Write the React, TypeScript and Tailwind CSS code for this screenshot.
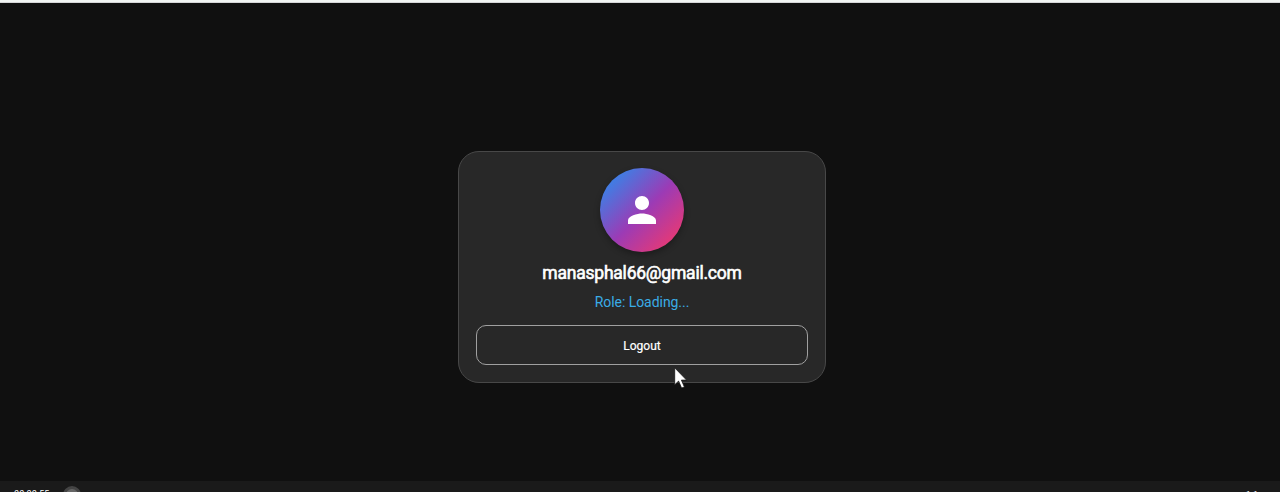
import React from 'react';

function Avatar() {
  return (
    <div className="flex size-[84px] shrink-0 items-center justify-center rounded-full bg-[linear-gradient(135deg,#2b8cf5_0%,#4778e0_18%,#9c3bb5_52%,#ff3860_100%)] shadow-[0_3px_6px_rgba(0,0,0,0.3)]">
      <svg viewBox="0 0 24 24" className="size-[42px] fill-white">
        <path d="M12 12c2.21 0 4-1.79 4-4s-1.79-4-4-4-4 1.79-4 4 1.79 4 4 4zm0 2c-2.67 0-8 1.34-8 4v2h16v-2c0-2.66-5.33-4-8-4z" />
      </svg>
    </div>
  );
}

function ProfileCard() {
  return (
    <section className="ml-1 flex h-[232px] w-[368px] flex-col items-center rounded-[21px] border border-[#484848] bg-[#282828] px-[17px] pt-4">
      <Avatar />
      <h1 className="mt-[9px] h-6 text-[17.5px] leading-6 font-normal tracking-[-0.22px] text-white [-webkit-text-stroke:0.6px_white]">manasphal66@gmail.com</h1>
      <p className="mt-[7px] h-5 text-sm leading-5 tracking-[-0.05px] text-[#3aace6]">Role: Loading...</p>
      <button className="mt-[13px] h-10 w-[332px] shrink-0 rounded-[10px] border border-[#a0a0a0] pt-[2px] text-xs font-normal text-white [-webkit-text-stroke:0.2px_white]">Logout</button>
    </section>
  );
}

function PlayerBar() {
  return (
    <footer className="flex h-[11px] items-start justify-between overflow-hidden bg-[#1a1a1a] pr-[22px] pl-[14px] text-[9px] leading-[11px] text-white">
      <div className="flex gap-[13px]">
        <span className="mt-[8px] w-9 tracking-[0.1px]">00:00:55</span>
        <span className="mt-[5px] size-[18px] shrink-0 rounded-full border-[3px] border-[#444] bg-[#666]" />
      </div>
      <span className="mt-[9px]">1:1</span>
    </footer>
  );
}

export default function App() {
  return (
    <div className="relative flex h-[492px] flex-col overflow-hidden bg-[#101010] font-[Roboto,sans-serif]">
      <div className="h-[3px] shrink-0 border-b border-[#d5d5d7] bg-[#f2f5f3]" />
      <main className="flex flex-1 items-start justify-center pt-[148px]">
        <ProfileCard />
      </main>
      <PlayerBar />
      <svg viewBox="0 0 13 22" className="absolute top-[367px] left-[674px] h-[22px] w-[13px]">
        <path d="M.7.8v17l3.9-3.7 3 7 2.8-1.2-3-6.8h5.2z" fill="white" stroke="#161616" strokeWidth=".8" />
      </svg>
    </div>
  );
}
